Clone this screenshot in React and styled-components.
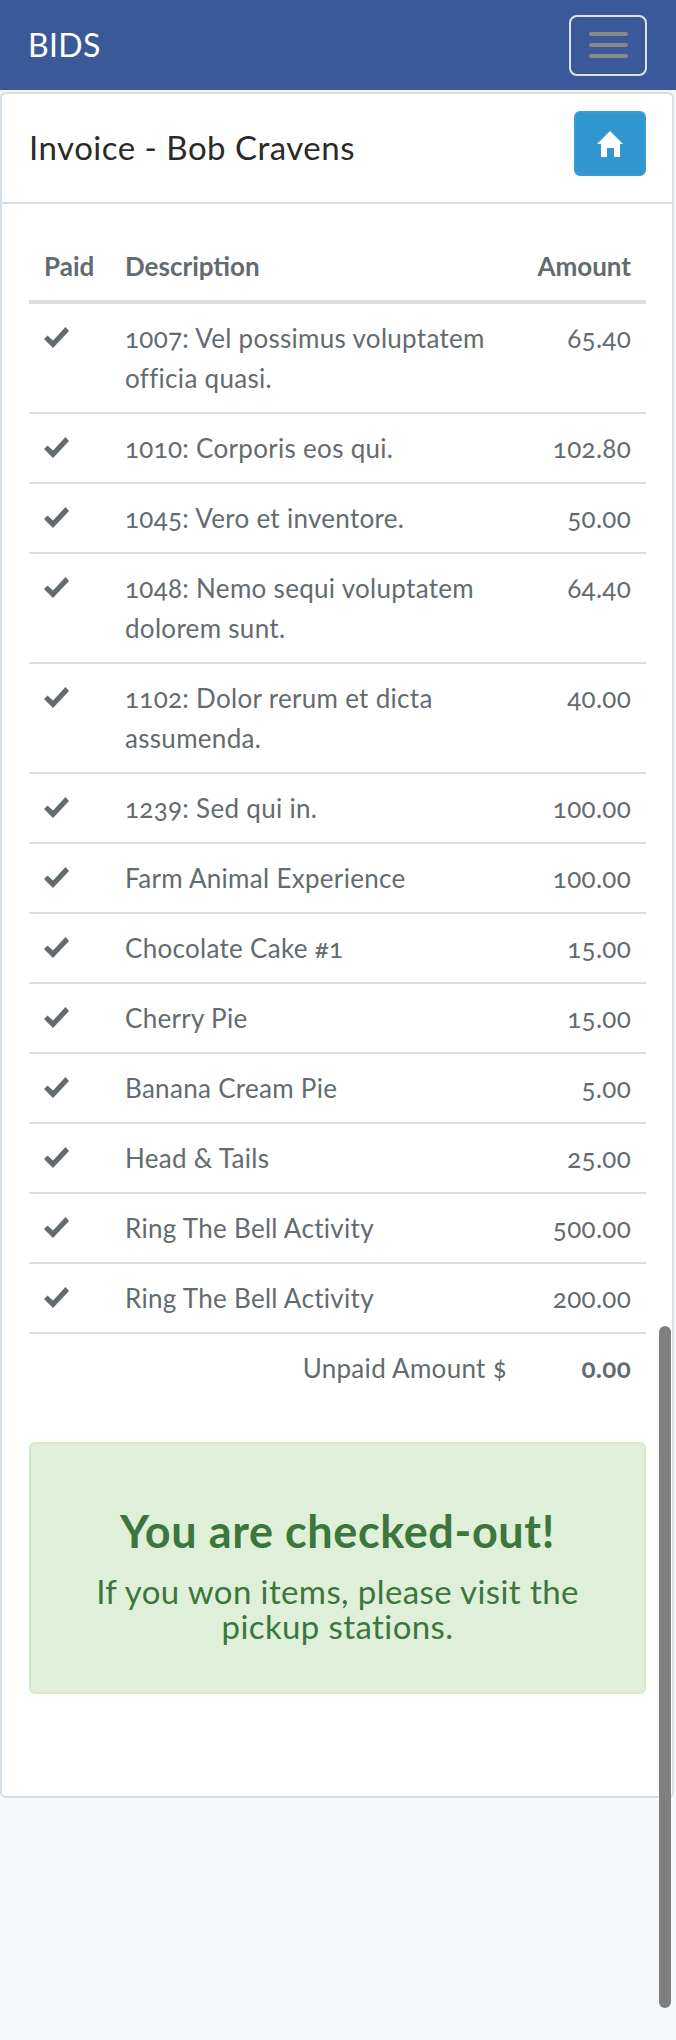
import React from "react"
import styled, { createGlobalStyle } from "styled-components"

const rows = [
  { text: "1007: Vel possimus voluptatem officia quasi.", amount: "65.40" },
  { text: "1010: Corporis eos qui.", amount: "102.80" },
  { text: "1045: Vero et inventore.", amount: "50.00" },
  { text: "1048: Nemo sequi voluptatem dolorem sunt.", amount: "64.40" },
  { text: "1102: Dolor rerum et dicta assumenda.", amount: "40.00" },
  { text: "1239: Sed qui in.", amount: "100.00" },
  { text: "Farm Animal Experience", amount: "100.00" },
  { text: "Chocolate Cake #1", amount: "15.00" },
  { text: "Cherry Pie", amount: "15.00" },
  { text: "Banana Cream Pie", amount: "5.00" },
  { text: "Head & Tails", amount: "25.00" },
  { text: "Ring The Bell Activity", amount: "500.00" },
  { text: "Ring The Bell Activity", amount: "200.00" },
]

const GlobalStyle = createGlobalStyle`
  html, body {
    margin: 0;
    height: 2040px;
    overflow: hidden;
    background: #f5f8fa;
  }
  * {
    box-sizing: border-box;
  }
  body {
    font-family: "Lato", "Liberation Sans", sans-serif;
    font-variant-numeric: oldstyle-nums;
    color: #636b6f;
    font-size: 26px;
    line-height: 40px;
    letter-spacing: 0.3px;
  }
`

const Page = styled.div`
  position: relative;
  height: 2040px;
`

const Navbar = styled.nav`
  display: flex;
  align-items: center;
  justify-content: space-between;
  height: 90px;
  padding: 0 29px 0 28px;
  background: #3b5998;
`

const Brand = styled.div`
  color: #fff;
  font-size: 32px;
`

const Toggler = styled.div`
  display: flex;
  flex-direction: column;
  align-items: center;
  justify-content: center;
  gap: 7px;
  width: 78px;
  height: 61px;
  border: 2px solid #dde2ec;
  border-radius: 8px;
`

const Bar = styled.span`
  width: 39px;
  height: 4px;
  border-radius: 2px;
  background: #888;
`

const Panel = styled.section`
  margin: 2px 2px 0 0;
  height: 1706px;
  background: #fff;
  border: 2px solid #d3e0e9;
  border-radius: 6px;
`

const PanelHeader = styled.header`
  display: flex;
  align-items: center;
  justify-content: space-between;
  height: 110px;
  padding: 0 26px 9px 27px;
  border-bottom: 2px solid #d3e0e9;
`

const Title = styled.h1`
  margin: 6px 0 0;
  font-size: 33px;
  font-weight: 400;
  letter-spacing: 0.5px;
  color: #2a2a2a;
`

const HomeButton = styled.div`
  display: flex;
  align-items: center;
  justify-content: center;
  width: 72px;
  height: 65px;
  background: #3097d1;
  border: 2px solid #3a9bd3;
  border-radius: 6px;
`

const PanelBody = styled.div`
  padding: 36px 26px 0 27px;
`

const Table = styled.table`
  width: 617px;
  border-collapse: separate;
  border-spacing: 0;
  table-layout: fixed;
`

const Head = styled.th`
  width: ${p => p.$width}px;
  padding: 6px 15px 14px;
  height: 60px;
  font-size: 26px;
  font-weight: 700;
  letter-spacing: 0;
  text-align: ${p => p.$align || "left"};
  border-bottom: 4px solid #ddd;
`

const Cell = styled.td`
  padding: 14px 15px;
  vertical-align: top;
  text-align: ${p => p.$align || "left"};
  border-bottom: 2px solid #ddd;
`

const FootCell = styled.td`
  padding: 14px 15px;
  text-align: ${p => p.$align || "left"};
  font-weight: ${p => (p.$bold ? 700 : 400)};
`

const Check = styled.svg`
  display: block;
  width: 25px;
  height: 21px;
  margin-top: 9px;
  fill: #636b6f;
`

const Alert = styled.div`
  margin-top: 40px;
  height: 252px;
  padding: 64px 40px 0;
  text-align: center;
  color: #3c763d;
  background: #dff0d8;
  border: 2px solid #d6e9c6;
  border-radius: 6px;
`

const AlertTitle = styled.h2`
  margin: 0;
  font-size: 45px;
  line-height: 46px;
  font-weight: 700;
  letter-spacing: 0.6px;
`

const AlertText = styled.p`
  margin: 20px 0 0;
  font-size: 33px;
  line-height: 35px;
  letter-spacing: 0.4px;
`

const Scrollbar = styled.div`
  position: absolute;
  top: 1326px;
  left: 659px;
  width: 12px;
  height: 682px;
  border-radius: 6px;
  background: #7f7f7f;
`

const App = () => {
  return (
    <Page>
      <GlobalStyle />
      <Navbar>
        <Brand>BIDS</Brand>
        <Toggler>
          <Bar />
          <Bar />
          <Bar />
        </Toggler>
      </Navbar>
      <Panel>
        <PanelHeader>
          <Title>Invoice - Bob Cravens</Title>
          <HomeButton>
            <svg width="26" height="26" viewBox="0 0 26 26" fill="#fff">
              <path d="M13 0 L26 13 L23 13 L23 26 L17 26 L17 17 L10 17 L10 26 L4 26 L4 13 L0 13 Z" />
            </svg>
          </HomeButton>
        </PanelHeader>
        <PanelBody>
          <Table>
            <thead>
              <tr>
                <Head $width={81}>Paid</Head>
                <Head>Description</Head>
                <Head $width={124} $align="right">Amount</Head>
              </tr>
            </thead>
            <tbody>
              {rows.map((row, i) => (
                <tr key={i}>
                  <Cell>
                    <Check viewBox="0 0 25 21">
                      <polygon points="0,12 3.5,8.5 9,13.5 21.5,0 25,4 9,21" />
                    </Check>
                  </Cell>
                  <Cell>{row.text}</Cell>
                  <Cell $align="right">{row.amount}</Cell>
                </tr>
              ))}
            </tbody>
            <tfoot>
              <tr>
                <FootCell colSpan={2} $align="right">Unpaid Amount $</FootCell>
                <FootCell $align="right" $bold>0.00</FootCell>
              </tr>
            </tfoot>
          </Table>
          <Alert>
            <AlertTitle>You are checked-out!</AlertTitle>
            <AlertText>If you won items, please visit the pickup stations.</AlertText>
          </Alert>
        </PanelBody>
      </Panel>
      <Scrollbar />
    </Page>
  )
}

export default App
